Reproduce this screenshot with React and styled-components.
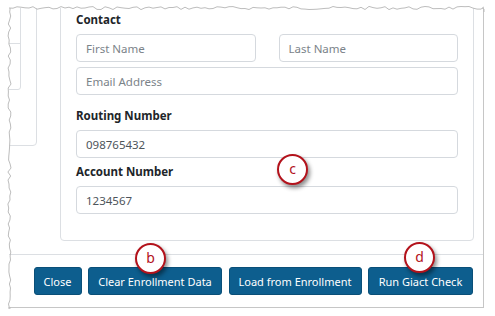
import React from 'react';
import styled, { createGlobalStyle } from 'styled-components';

const GlobalStyle = createGlobalStyle`
  html, body {
    margin: 0;
    padding: 0;
    background: #ffffff;
  }
  body {
    font-family: "Noto Sans", "Open Sans", sans-serif;
    color: #212529;
  }
`;

const Page = styled.div`
  position: relative;
  width: 495px;
  height: 316px;
  padding: 8px 0 0 9px;
  box-sizing: border-box;
`;

const Frame = styled.div`
  width: 475px;
  height: 300px;
  box-sizing: border-box;
  border-right: 1px solid #c6c6c6;
  border-bottom: 1px solid #c6c6c6;
  overflow: hidden;
  display: flex;
  flex-direction: column;
  position: relative;
`;

const Body = styled.div`
  height: 246px;
  display: flex;
  flex-shrink: 0;
`;

const LeftCol = styled.div`
  width: 51px;
  flex-shrink: 0;
`;

const OuterPanel = styled.div`
  margin: -10px 23px 0 -10px;
  height: 148px;
  box-sizing: border-box;
  border: 1px solid #dcdfe3;
  border-radius: 4px;
`;

const InnerPanel = styled.div`
  margin: -1px 15px 0 -1px;
  height: 92px;
  box-sizing: border-box;
  border: 1px solid #dcdfe3;
  border-radius: 0 0 3px 0;
  display: flex;
  flex-direction: column;
`;

const InnerRow = styled.div`
  height: 44px;
  border-bottom: 1px solid #dcdfe3;
`;

const Card = styled.div`
  width: 414px;
  height: 243px;
  margin-top: -10px;
  box-sizing: border-box;
  border: 1px solid #dcdfe3;
  border-radius: 4px;
  padding: 12px 15px 0 15px;
  display: flex;
  flex-direction: column;
`;

const Label = styled.div`
  font-size: 11.5px;
  font-weight: 700;
  line-height: 18px;
  margin-top: ${p => p.$top || 0}px;
  margin-bottom: 5px;
  color: #212529;
`;

const Row = styled.div`
  display: grid;
  grid-template-columns: 1fr 1fr;
  column-gap: 23px;
  margin-bottom: 5px;
`;

const Input = styled.div`
  height: 28px;
  box-sizing: border-box;
  border: 1px solid #d5d9de;
  border-radius: 4px;
  padding: 0 9px;
  display: flex;
  align-items: center;
  font-size: 11.5px;
  color: ${p => (p.$placeholder ? '#7b8389' : '#4e555b')};
`;

const Footer = styled.div`
  flex: 1;
  border-top: 1px solid #dcdfe3;
  display: flex;
  justify-content: flex-end;
  align-items: flex-start;
  gap: 6.5px;
  padding: 12px 10px 0 0;
`;

const Button = styled.button`
  height: 28px;
  padding: 0;
  border: 1px solid #0a4f78;
  border-radius: 3px;
  background: #0d5e8e;
  color: #ffffff;
  font-family: "Noto Sans", "Open Sans", sans-serif;
  font-size: 11px;
  line-height: 1;
  white-space: nowrap;
  width: ${p => p.$w}px;
`;

const Callout = styled.div`
  position: absolute;
  left: ${p => p.$x}px;
  top: ${p => p.$y}px;
  width: 27px;
  height: 25px;
  border: 2px solid #b3121b;
  border-radius: 50%;
  background: #ffffff;
  box-shadow: 2px 3px 4px rgba(0, 0, 0, 0.45);
  display: flex;
  align-items: center;
  justify-content: center;
  color: #b3121b;
  font-family: "Noto Sans", sans-serif;
  font-size: 14px;
  line-height: 1;
  padding-bottom: 2px;
  box-sizing: content-box;
`;

const TornEdge = styled.svg`
  position: absolute;
  left: 0;
  top: 0;
  width: 495px;
  height: 316px;
  pointer-events: none;
`;

function jagged(seed, count) {
  let s = seed;
  const out = [];
  for (let i = 0; i < count; i++) {
    s = (s * 9301 + 49297) % 233280;
    out.push(s / 233280);
  }
  return out;
}

const topRand = jagged(7, 120);
const leftRand = jagged(13, 80);

const topPath = topRand
  .map((r, i) => {
    const x = 9 + i * 4;
    const y = 8 + (r - 0.5) * 3.2;
    return `${i === 0 ? 'M' : 'L'}${Math.min(x, 484)},${y.toFixed(1)}`;
  })
  .join(' ');

const leftPath = leftRand
  .map((r, i) => {
    const y = 8 + i * 4;
    const x = 9.5 + (r - 0.5) * 3.2;
    return `${i === 0 ? 'M' : 'L'}${x.toFixed(1)},${Math.min(y, 308)}`;
  })
  .join(' ');

const buttons = [
  { label: 'Close', w: 48 },
  { label: 'Clear Enrollment Data', w: 134 },
  { label: 'Load from Enrollment', w: 133 },
  { label: 'Run Giact Check', w: 105 },
];

export default function App() {
  return (
    <>
      <GlobalStyle />
      <Page>
        <Frame>
          <Body>
            <LeftCol>
              <OuterPanel>
                <InnerPanel>
                  <InnerRow />
                </InnerPanel>
              </OuterPanel>
            </LeftCol>
            <Card>
              <Label>Contact</Label>
              <Row>
                <Input $placeholder>First Name</Input>
                <Input $placeholder>Last Name</Input>
              </Row>
              <Input $placeholder>Email Address</Input>
              <Label $top={12}>Routing Number</Label>
              <Input>098765432</Input>
              <Label $top={5}>Account Number</Label>
              <Input>1234567</Input>
            </Card>
          </Body>
          <Footer>
            {buttons.map(b => (
              <Button key={b.label} $w={b.w}>{b.label}</Button>
            ))}
          </Footer>
        </Frame>
        <Callout $x={135} $y={243}>b</Callout>
        <Callout $x={277} $y={154}>c</Callout>
        <Callout $x={404} $y={242}>d</Callout>
        <TornEdge viewBox="0 0 495 316">
          <path d={topPath} fill="none" stroke="#bdbdbd" strokeWidth="1" />
          <path d={leftPath} fill="none" stroke="#bdbdbd" strokeWidth="1" />
          <path d="M482,8 L484,9 L484,12" fill="none" stroke="#bdbdbd" strokeWidth="1" />
        </TornEdge>
      </Page>
    </>
  );
}
